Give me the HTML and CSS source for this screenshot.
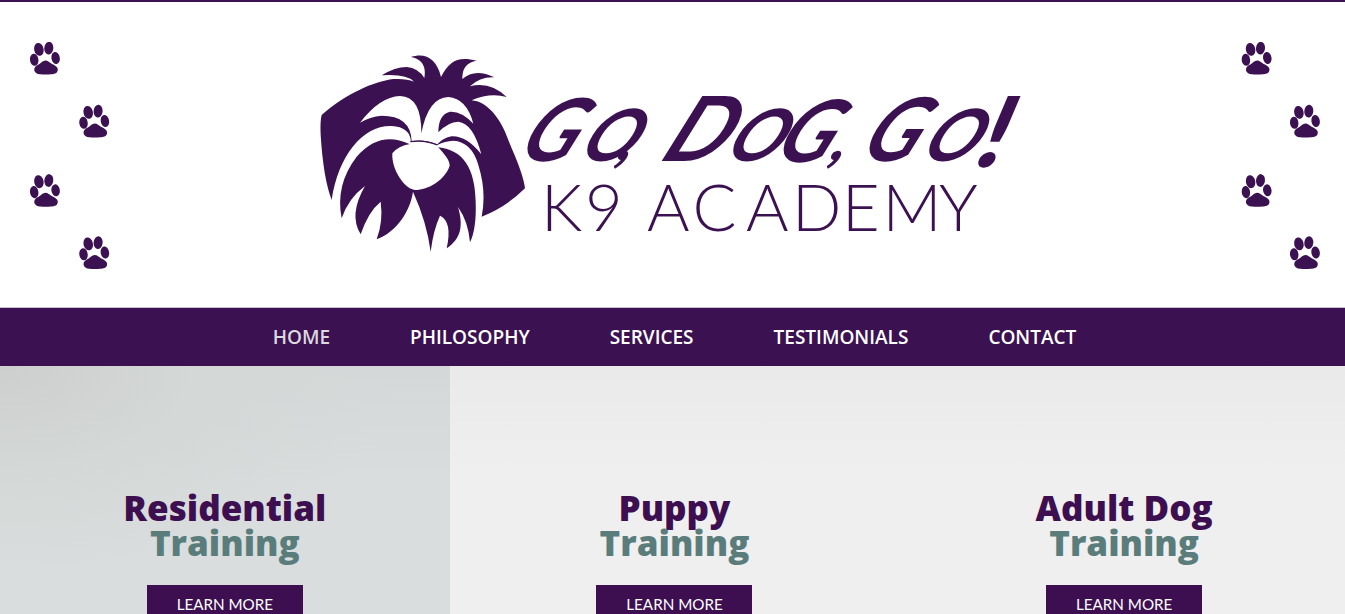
FILE: index.html
```html
<!DOCTYPE html>
<html lang="en">
<head>
<meta charset="utf-8">
<title>Go, Dog, Go! K9 Academy</title>
<link rel="stylesheet" href="styles.css">
</head>
<body>
<header class="header">
  <svg class="paws" viewBox="0 0 90 228" aria-hidden="true">
    <defs>
      <g id="paw">
        <ellipse cx="4.2" cy="17.8" rx="4.2" ry="6.1" transform="rotate(-8 4.2 17.8)"/>
        <ellipse cx="8.9" cy="7.4" rx="4.7" ry="6.5" transform="rotate(-12 8.9 7.4)"/>
        <ellipse cx="18.8" cy="6.2" rx="4.5" ry="6.4" transform="rotate(6 18.8 6.2)"/>
        <ellipse cx="25.6" cy="16" rx="4.2" ry="6" transform="rotate(-10 25.6 16)"/>
        <path d="M15.3 18.5C18 18.5 19.5 20.5 22 22C25.5 23.4 28.5 25.5 27.7 28.5C27 31.6 24 32.2 21 32.2Q15.5 32.8 10 32.2C7 32.2 4.600 30.600 4.200 28C4.100 25 6.200 23.500 9 22.200C11.500 20.900 12.800 18.500 15.300 18.500Z"/>
      </g>
    </defs>
    <use href="#paw" x="0" y="0"/>
    <use href="#paw" x="49.300" y="63"/>
    <use href="#paw" x="0" y="132.300"/>
    <use href="#paw" x="49.300" y="194.500"/>
  </svg>
  <svg class="logo" viewBox="310 45 725 215" role="img" aria-label="Go, Dog, Go! K9 Academy">
    <g transform="translate(310 45) scale(.33333)">
      <path d="M35 210C110 145 190 110 250 102Q290 100 312 110Q290 86 215 91Q255 66 290 66Q325 69 343 99Q352 45 303 36C345 22 380 40 393 96C420 45 445 34 500 47Q455 55 457 102Q495 68 553 97Q510 95 480 124Q540 108 590 156Q540 142 485 166C530 170 565 215 585 260L605 310Q640 390 645 430Q590 485 515 515Q530 440 505 360Q485 290 430 287Q405 288 382 300Q340 285 303 290Q300 246 245 243C160 240 85 330 65 465Q40 400 32 270Q30 230 35 210Z"/>
      <path class="cut" d="M150 233Q210 155 270 153Q335 155 334 265Q355 157 415 156Q470 160 490 236Q455 198 420 200Q385 208 385 262Q415 230 445 230Q490 235 514 328Q470 272 425 274Q400 278 382 298Q345 282 305 288Q302 212 215 212Q180 215 150 233Z"/>
      <path d="M298 297Q210 255 140 335Q75 420 95 520Q115 460 165 423Q115 510 152 568Q175 500 212 470Q220 530 200 583C260 560 300 500 309 440Q350 530 362 620Q370 555 390 512Q428 530 410 610C455 580 460 540 444 486Q475 530 480 592Q500 550 497 470C495 370 460 315 385 307Z"/>
      <path class="cut" d="M247 325Q265 302 300 297Q345 290 382 303C405 330 419 345 419 362C405 405 355 435 315 435C285 433 244 375 247 325Z"/>
      <path class="bridge" d="M301 290Q345 284 382 300"/>
    </g>
    <g class="brush">
      <g transform="translate(512 161) skewX(-32)">
        <text x="0" y="0" font-size="87" textLength="54" lengthAdjust="spacingAndGlyphs">G</text>
        <text x="62" y="0" font-size="72" textLength="54" lengthAdjust="spacingAndGlyphs">O</text>
      </g>
      <text class="comma" transform="translate(614 160) skewX(-24)">,</text>
      <g transform="translate(661 161) skewX(-32)">
        <text x="-6" y="0" font-size="90" textLength="63" lengthAdjust="spacingAndGlyphs">D</text>
        <text x="59" y="0" font-size="72" textLength="54" lengthAdjust="spacingAndGlyphs">O</text>
        <text x="108" y="1" font-size="86" textLength="54" lengthAdjust="spacingAndGlyphs">G</text>
      </g>
      <text class="comma" transform="translate(827 160) skewX(-24)">,</text>
      <g transform="translate(854 161) skewX(-32)">
        <text x="0" y="0" font-size="88" textLength="54" lengthAdjust="spacingAndGlyphs">G</text>
        <text x="62" y="0" font-size="72" textLength="54" lengthAdjust="spacingAndGlyphs">O</text>
      </g>
      <text class="bang" transform="translate(970 167) skewX(-23)">!</text>
    </g>
    <g class="thin">
      <text x="541 585" y="231">K9</text>
      <text x="647 692.500 746 792 842 882.500 939" y="231">ACADEMY</text>
    </g>
  </svg>
  <svg class="paws" viewBox="0 0 90 228" aria-hidden="true">
    <use href="#paw" x="8.700" y="0"/>
    <use href="#paw" x="57" y="63"/>
    <use href="#paw" x="8.700" y="132.300"/>
    <use href="#paw" x="57" y="194.500"/>
  </svg>
</header>
<nav class="nav">
  <a class="nav-link active">HOME</a>
  <a class="nav-link">PHILOSOPHY</a>
  <a class="nav-link">SERVICES</a>
  <a class="nav-link">TESTIMONIALS</a>
  <a class="nav-link">CONTACT</a>
</nav>
<main class="cards">
  <section class="card residential">
    <h2 class="title">Residential<span class="sub">Training</span></h2>
    <a class="button">LEARN MORE</a>
  </section>
  <section class="card">
    <h2 class="title">Puppy<span class="sub">Training</span></h2>
    <a class="button">LEARN MORE</a>
  </section>
  <section class="card">
    <h2 class="title">Adult Dog<span class="sub">Training</span></h2>
    <a class="button">LEARN MORE</a>
  </section>
</main>
</body>
</html>
```
FILE: styles.css
```css
* { box-sizing: border-box; }
body {
  margin: 0;
  height: 614px;
  overflow: hidden;
  background: #fff;
  font-family: "Open Sans", sans-serif;
}
.header {
  height: 308px;
  padding: 40px 22px 0 30px;
  border-top: 2px solid #3c1151;
  border-bottom: 1px solid #c9bfd0;
  display: flex;
  justify-content: space-between;
  align-items: flex-start;
}
.paws { width: 90px; height: 228px; fill: #3c1151; }
.logo { width: 725px; height: 215px; margin: 3px 0 0 -8px; fill: #3c1151; }
.cut { fill: #fff; }
.bridge { fill: none; stroke: #3c1151; stroke-width: 4; }
.brush { font-family: Lato, sans-serif; font-weight: 700; }
.comma { font-size: 60px; font-weight: 900; }
.bang { font-size: 98px; font-weight: 900; }
.thin {
  font-family: Lato, sans-serif;
  font-weight: 300;
  font-size: 65px;
}
.nav {
  height: 58px;
  padding-left: 4px;
  background: #3c1151;
  display: flex;
  justify-content: center;
  gap: 80px;
}
.nav-link {
  color: #fff;
  font-size: 19px;
  font-weight: 600;
  line-height: 58px;
}
.active { color: #dcd8df; }
.cards {
  width: 1349px;
  height: 248px;
  display: grid;
  grid-template-columns: repeat(3, 1fr);
  background: linear-gradient(#eaeaea, #efefef 45%);
}
.card {
  padding-top: 124px;
  display: flex;
  flex-direction: column;
  align-items: center;
}
.residential {
  background: radial-gradient(ellipse 400px 210px at 0 0, #cccfcd, #d4d8d7 50%, transparent), linear-gradient(#d4d8d8, #d9dddd 45%);
}
.title {
  margin: 0;
  color: #3d0f50;
  font-size: 35px;
  font-weight: 800;
  line-height: 35px;
  text-align: center;
}
.sub { display: block; color: #5a7d7c; }
.button {
  margin-top: 25px;
  width: 156px;
  height: 38px;
  flex: none;
  background: #3d0f50;
  color: #fff;
  font: 400 15.2px/38px Lato, sans-serif;
  text-align: center;
}
```
